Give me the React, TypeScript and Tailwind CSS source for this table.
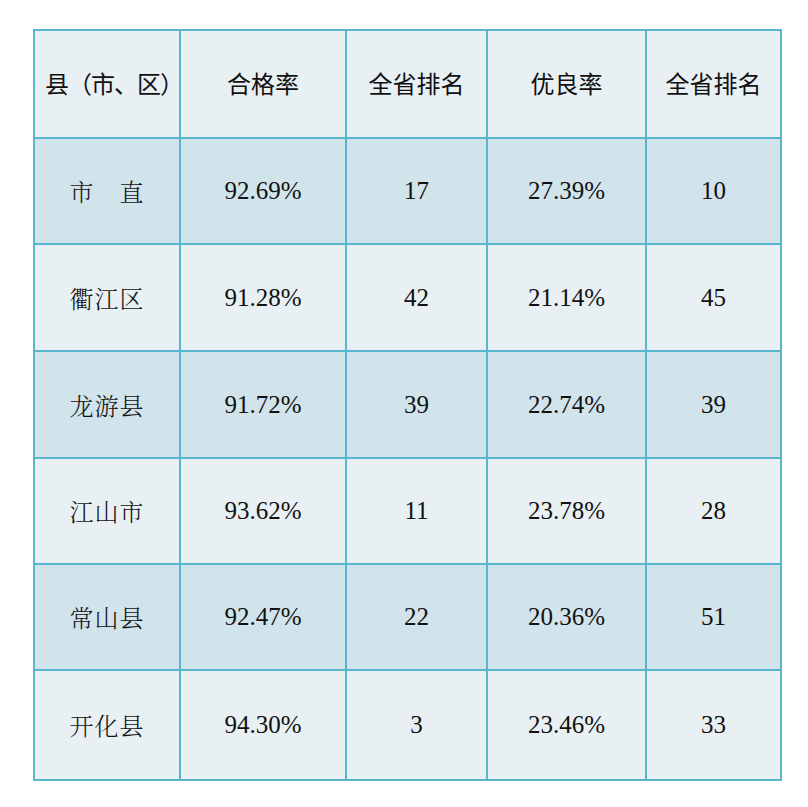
import React from "react";

const rows: [string, string, string, string, string][] = [
  ["市　直", "92.69%", "17", "27.39%", "10"],
  ["衢江区", "91.28%", "42", "21.14%", "45"],
  ["龙游县", "91.72%", "39", "22.74%", "39"],
  ["江山市", "93.62%", "11", "23.78%", "28"],
  ["常山县", "92.47%", "22", "20.36%", "51"],
  ["开化县", "94.30%", "3", "23.46%", "33"],
];

const headers = ["县（市、区）", "合格率", "全省排名", "优良率", "全省排名"];

export default function App() {
  return (
    <div className="w-[808px] h-[807px] bg-white pt-[29px] pl-[33px]">
      <div className="grid w-[749px] grid-cols-[144px_164px_139px_157px_133px] grid-rows-[106px_104px_105px_105px_104px_104px_108px] gap-[2px] p-[2px] bg-[#58b6cd]">
        {headers.map((h, i) => (
          <div
            key={"h" + i}
            className={
              "flex items-center justify-center bg-[#e8f0f4] pb-[3px] text-[24px] text-[#111] font-['Noto_Sans_CJK_SC',sans-serif]" +
              (i === 0 ? " tracking-[-1px] pl-[10px]" : "")
            }
          >
            {h}
          </div>
        ))}
        {rows.map((r, ri) => {
          const bg = ri % 2 === 0 ? "bg-[#d1e3eb]" : "bg-[#e8f0f4]";
          return r.map((c, ci) => (
            <div
              key={ri + "-" + ci}
              className={
                "flex items-center justify-center text-[#111] " +
                bg +
                (ci === 0
                  ? " text-[24px] font-light tracking-[1px] font-['Noto_Serif_CJK_SC','Noto_Sans_CJK_SC',serif]"
                  : " text-[25px] font-['Liberation_Serif',serif]")
              }
            >
              {c}
            </div>
          ));
        })}
      </div>
    </div>
  );
}
